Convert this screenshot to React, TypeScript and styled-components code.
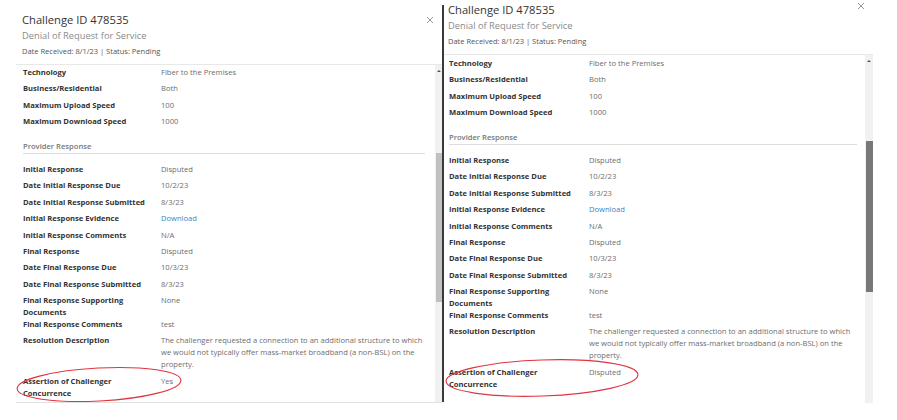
import React from 'react';
import styled, { createGlobalStyle } from 'styled-components';

const GlobalStyle = createGlobalStyle`
  html, body {
    margin: 0;
    padding: 0;
    background: #ffffff;
  }
  body {
    font-family: "Open Sans", "Liberation Sans", Arial, sans-serif;
  }
`;

const Page = styled.div`
  display: flex;
  width: 897px;
  height: 420px;
  overflow: hidden;
  background: #ffffff;
`;

const Panel = styled.section<{ $width: number; $inset: number }>`
  display: flex;
  flex-direction: column;
  flex-shrink: 0;
  width: ${({ $width }) => $width}px;
  padding-left: ${({ $inset }) => $inset}px;
  box-sizing: border-box;
`;

const Divider = styled.div`
  flex-shrink: 0;
  width: 1.5px;
  height: 397px;
  margin-top: 5px;
  background: #3a3a3a;
`;

const Header = styled.header<{ $top: number; $pad: number }>`
  display: flex;
  justify-content: space-between;
  align-items: flex-start;
  padding: ${({ $top }) => $top}px 8px 6px ${({ $pad }) => $pad}px;
  border-bottom: 1px solid #e8e8e8;
`;

const TitleBlock = styled.div`
  display: flex;
  flex-direction: column;
`;

const Title = styled.h2`
  margin: 0;
  font-size: 11.2px;
  line-height: 16px;
  font-weight: 400;
  color: #333333;
`;

const Subtitle = styled.div`
  font-size: 9.3px;
  line-height: 16px;
  color: #8a8a8a;
`;

const Meta = styled.div`
  font-size: 7.5px;
  line-height: 14px;
  color: #555555;
`;

const CloseButton = styled.button<{ $offset: number }>`
  width: 8px;
  height: 8px;
  margin-top: ${({ $offset }) => $offset}px;
  padding: 0;
  border: none;
  background: none;
  display: flex;
`;

const Body = styled.div<{ $height: number; $rule: boolean }>`
  display: flex;
  height: ${({ $height }) => $height}px;
  border-bottom: ${({ $rule }) => ($rule ? '1px solid #e2e2e2' : 'none')};
`;

const Content = styled.div<{ $top: number; $pad: number }>`
  flex: 1;
  padding: ${({ $top }) => $top}px 0 0 ${({ $pad }) => $pad}px;
  overflow: hidden;
  font-size: 7.6px;
  line-height: 12px;
`;

const Row = styled.div<{ $label: number; $value: number; $tight?: boolean }>`
  position: relative;
  display: grid;
  grid-template-columns: ${({ $label }) => $label}px ${({ $value }) => $value}px;
  padding-bottom: ${({ $tight }) => ($tight ? 0 : 4.4)}px;
`;

const Label = styled.div`
  padding-right: 10px;
  font-weight: 700;
  color: #333333;
`;

const Value = styled.div`
  color: #6d6d6d;
`;

const Link = styled.a`
  color: #3a85c5;
  text-decoration: none;
`;

const SectionHeading = styled.div<{ $gap: number }>`
  margin: 8.4px ${({ $gap }) => $gap}px 8.5px 0;
  padding-bottom: 1.5px;
  border-bottom: 1px solid #dedede;
  font-weight: 600;
  color: #777777;
`;

const Scrollbar = styled.div<{ $width: number }>`
  display: flex;
  flex-direction: column;
  align-items: center;
  flex-shrink: 0;
  width: ${({ $width }) => $width}px;
  background: #f1f1f1;
`;

const ArrowBox = styled.div`
  display: flex;
  align-items: center;
  justify-content: center;
  height: 12px;
  width: 100%;
`;

const Arrow = styled.div`
  width: 0;
  height: 0;
  border-left: 2.2px solid transparent;
  border-right: 2.2px solid transparent;
  border-bottom: 2.4px solid #555555;
`;

const Thumb = styled.div<{ $top: number; $height: number; $color: string }>`
  width: calc(100% - 1px);
  margin-top: ${({ $top }) => $top - 12}px;
  height: ${({ $height }) => $height}px;
  background: ${({ $color }) => $color};
`;

const Highlight = styled.svg`
  position: absolute;
  pointer-events: none;
  overflow: visible;
`;

type Entry = {
  label: string;
  value: React.ReactNode;
  tight?: boolean;
  highlight?: boolean;
};

const detailRows: Entry[] = [
  { label: 'Technology', value: 'Fiber to the Premises' },
  { label: 'Business/Residential', value: 'Both' },
  { label: 'Maximum Upload Speed', value: '100' },
  { label: 'Maximum Download Speed', value: '1000' },
];

const responseRows = (assertion: string): Entry[] => [
  { label: 'Initial Response', value: 'Disputed' },
  { label: 'Date Initial Response Due', value: '10/2/23' },
  { label: 'Date Initial Response Submitted', value: '8/3/23' },
  { label: 'Initial Response Evidence', value: <Link href="#">Download</Link> },
  { label: 'Initial Response Comments', value: 'N/A' },
  { label: 'Final Response', value: 'Disputed' },
  { label: 'Date Final Response Due', value: '10/3/23' },
  { label: 'Date Final Response Submitted', value: '8/3/23' },
  { label: 'Final Response Supporting Documents', value: 'None', tight: true },
  { label: 'Final Response Comments', value: 'test' },
  {
    label: 'Resolution Description',
    value:
      'The challenger requested a connection to an additional structure to which we would not typically offer mass-market broadband (a non-BSL) on the property.',
  },
  { label: 'Assertion of Challenger Concurrence', value: assertion, highlight: true },
];

type Layout = {
  width: number;
  inset: number;
  pad: number;
  headerTop: number;
  closeOffset: number;
  bodyHeight: number;
  bodyTop: number;
  bottomRule: boolean;
  labelWidth: number;
  valueWidth: number;
  headingGap: number;
  barWidth: number;
  thumbTop: number;
  thumbHeight: number;
  thumbColor: string;
  ring: { left: number; top: number; width: number; height: number; tilt: number };
};

const CloseIcon = () => (
  <svg width="8" height="8" viewBox="0 0 8 8">
    <path d="M1 1 L7 7 M7 1 L1 7" stroke="#7d7d7d" strokeWidth="0.8" fill="none" />
  </svg>
);

const Ring = ({ left, top, width, height, tilt }: Layout['ring']) => (
  <Highlight style={{ left, top, width, height }} viewBox={`0 0 ${width} ${height}`}>
    <ellipse
      cx={width / 2}
      cy={height / 2}
      rx={width / 2 - 1}
      ry={height / 2 - 1}
      fill="none"
      stroke="#e0323f"
      strokeWidth="1.1"
      transform={`rotate(${tilt} ${width / 2} ${height / 2})`}
    />
  </Highlight>
);

const ChallengePanel = ({ layout, assertion }: { layout: Layout; assertion: string }) => {
  const renderRow = (entry: Entry) => (
    <Row key={entry.label} $label={layout.labelWidth} $value={layout.valueWidth} $tight={entry.tight}>
      <Label>{entry.label}</Label>
      <Value>{entry.value}</Value>
      {entry.highlight && <Ring {...layout.ring} />}
    </Row>
  );

  return (
    <Panel $width={layout.width} $inset={layout.inset}>
      <Header $top={layout.headerTop} $pad={layout.pad - 1}>
        <TitleBlock>
          <Title>Challenge ID 478535</Title>
          <Subtitle>Denial of Request for Service</Subtitle>
          <Meta>Date Received: 8/1/23 | Status: Pending</Meta>
        </TitleBlock>
        <CloseButton $offset={layout.closeOffset} aria-label="Close">
          <CloseIcon />
        </CloseButton>
      </Header>
      <Body $height={layout.bodyHeight} $rule={layout.bottomRule}>
        <Content $top={layout.bodyTop} $pad={layout.pad}>
          {detailRows.map(renderRow)}
          <SectionHeading $gap={layout.headingGap}>Provider Response</SectionHeading>
          {responseRows(assertion).map(renderRow)}
        </Content>
        <Scrollbar $width={layout.barWidth}>
          <ArrowBox>
            <Arrow />
          </ArrowBox>
          <Thumb $top={layout.thumbTop} $height={layout.thumbHeight} $color={layout.thumbColor} />
        </Scrollbar>
      </Body>
    </Panel>
  );
};

const before: Layout = {
  width: 442,
  inset: 16,
  pad: 7,
  headerTop: 12,
  closeOffset: 4,
  bodyHeight: 337,
  bodyTop: 1,
  bottomRule: true,
  labelWidth: 138,
  valueWidth: 264,
  headingGap: 10,
  barWidth: 7,
  thumbTop: 88,
  thumbHeight: 149,
  thumbColor: '#c1c1c1',
  ring: { left: -7, top: -8, width: 166, height: 35, tilt: -3 },
};

const after: Layout = {
  width: 429.5,
  inset: 0,
  pad: 5.5,
  headerTop: 2,
  closeOffset: 0,
  bodyHeight: 348,
  bodyTop: 2,
  bottomRule: false,
  labelWidth: 140,
  valueWidth: 268,
  headingGap: 8,
  barWidth: 8,
  thumbTop: 86,
  thumbHeight: 151,
  thumbColor: '#787878',
  ring: { left: -4, top: -7, width: 194, height: 38, tilt: -2 },
};

const App = () => (
  <>
    <GlobalStyle />
    <Page>
      <ChallengePanel layout={before} assertion="Yes" />
      <Divider />
      <ChallengePanel layout={after} assertion="Disputed" />
    </Page>
  </>
);

export default App;
